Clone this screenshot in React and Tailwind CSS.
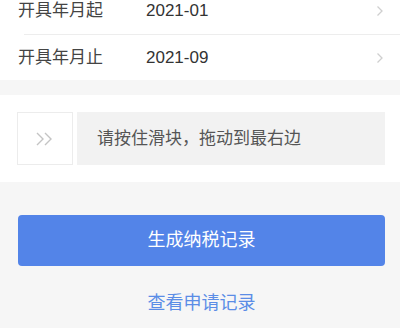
export default function App() {
  const font = { fontFamily: '"Liberation Sans", "Noto Sans CJK SC", sans-serif' };

  return (
    <div className="w-[400px] h-[328px] overflow-hidden bg-[#f6f6f6] text-[#333]" style={font}>
      <div className="bg-white -mt-[13px]">
        <div className="flex items-center h-[47px] pl-[18px] pr-[16px]">
          <span className="w-[128px] text-[17px] text-[#444]">开具年月起</span>
          <span className="flex-1 text-[17px] text-[#333]">2021-01</span>
          <Chevron />
        </div>
        <div className="ml-[24px] h-px bg-[#ededed]" />
        <div className="flex items-center h-[45px] pl-[18px] pr-[16px]">
          <span className="w-[128px] text-[17px] text-[#444]">开具年月止</span>
          <span className="flex-1 text-[17px] text-[#333]">2021-09</span>
          <Chevron />
        </div>
      </div>

      <div className="bg-white mt-[15px] pt-[17px] pb-[17px] pl-[17px] pr-[15px]">
        <div className="flex h-[53px] gap-[4px]">
          <div className="w-[56px] flex items-center justify-center bg-white border border-[#ececec]">
            <svg width="20" height="14" viewBox="0 0 20 14" fill="none" stroke="#c4c4c4" strokeWidth="1.4">
              <path d="M2 1l6 6-6 6" />
              <path d="M10 1l6 6-6 6" />
            </svg>
          </div>
          <div className="flex-1 flex items-center pl-[20px] bg-[#f2f2f2] text-[17px] text-[#555]">
            请按住滑块，拖动到最右边
          </div>
        </div>
      </div>

      <div className="px-[18px] pt-[33px] pr-[15px]">
        <button className="w-full h-[51px] rounded-[4px] bg-[#5384e8] text-white text-[18px]">
          生成纳税记录
        </button>
        <div className="text-center text-[18px] text-[#5b8de6] mt-[24px]">查看申请记录</div>
      </div>
    </div>
  );
}

function Chevron() {
  return (
    <svg width="8" height="12" viewBox="0 0 8 12" fill="none" stroke="#cfcfcf" strokeWidth="1.3">
      <path d="M1.5 1.5l4.5 4.5-4.5 4.5" />
    </svg>
  );
}
